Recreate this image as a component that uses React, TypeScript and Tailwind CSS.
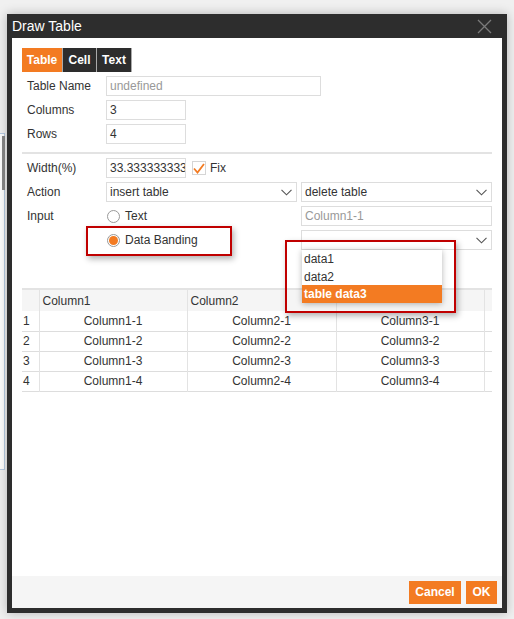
import React from 'react';

const ORANGE = 'bg-[#f37b22]';

function Chevron() {
  return (
    <svg width="11" height="7" viewBox="0 0 11 7" className="shrink-0">
      <path d="M0.5 0.8 L5.5 5.8 L10.5 0.8" fill="none" stroke="#555" strokeWidth="1.1" />
    </svg>
  );
}

function Select({ value, className = '' }: { value?: string; className?: string }) {
  return (
    <div
      className={`flex h-[20px] items-center justify-between border border-[#dddddd] bg-white pl-[3px] pr-[4px] text-[12px] text-[#333] ${className}`}
    >
      <span>{value}</span>
      <Chevron />
    </div>
  );
}

function Input({ value, placeholder, className = '' }: { value?: string; placeholder?: string; className?: string }) {
  return (
    <div
      className={`flex h-[20px] items-center overflow-hidden whitespace-nowrap border border-[#dddddd] bg-white pl-[3px] text-[12px] ${
        value ? 'text-[#333]' : 'text-[#999]'
      } ${className}`}
    >
      {value ?? placeholder}
    </div>
  );
}

function Radio({ checked, label }: { checked?: boolean; label: string }) {
  return (
    <div className="flex items-center gap-[5px] text-[12px] text-[#333]">
      <span className="flex h-[13px] w-[13px] items-center justify-center rounded-full border border-[#999] bg-white">
        {checked && <span className="h-[9px] w-[9px] rounded-full bg-[#f37b22]" />}
      </span>
      <span>{label}</span>
    </div>
  );
}

function Row({ label, children }: { label?: string; children: React.ReactNode }) {
  return (
    <div className="flex h-[20px] items-center">
      <div className="w-[84px] shrink-0 pl-[5px] text-[12px] text-[#333]">{label}</div>
      {children}
    </div>
  );
}

const rows = [1, 2, 3, 4];

export default function App() {
  return (
    <div
      className="relative h-[619px] w-[514px] overflow-hidden bg-[#f0f0f0] pt-[14px] pl-[7px]"
      style={{ fontFamily: '"Liberation Sans", Arial, sans-serif' }}
    >
      {/* page element peeking out behind the dialog */}
      <div className="absolute left-[-4px] top-[133px] h-[337px] w-[9px] border border-[#b7cbe2] bg-white">
        <div className="ml-[5px] mt-[2px] h-[54px] w-[3px] bg-[#888]" />
      </div>

      <div className="relative flex h-[599px] w-[500px] flex-col bg-[#2d2d2d] px-[5px] pb-[5px] shadow-[0_0_10px_rgba(0,0,0,0.25)]">
        {/* title */}
        <div className="flex h-[24px] shrink-0 items-center justify-between">
          <span className="text-[14px] text-white">Draw Table</span>
          <svg width="15" height="15" viewBox="0 0 15 15" className="mr-[10px]">
            <path d="M1 1 L14 14 M14 1 L1 14" stroke="#7a7a7a" strokeWidth="1.3" />
          </svg>
        </div>

        {/* body */}
        <div className="relative flex-1 bg-white px-[10px] pt-[10px]">
          {/* tabs */}
          <div className="flex h-[24px] text-[12px] font-bold text-white">
            <div className={`flex w-[41px] items-center justify-center border-r border-[#aaa] ${ORANGE}`}>Table</div>
            <div className="flex w-[34px] items-center justify-center border-r border-[#aaa] bg-[#2d2d2d]">Cell</div>
            <div className="flex w-[35px] items-center justify-center border-r border-[#aaa] bg-[#2d2d2d]">Text</div>
          </div>

          <div className="mt-[4px] flex flex-col gap-[4px]">
            <Row label="Table Name">
              <Input placeholder="undefined" className="w-[215px]" />
            </Row>
            <Row label="Columns">
              <Input value="3" className="w-[80px]" />
            </Row>
            <Row label="Rows">
              <Input value="4" className="w-[80px]" />
            </Row>
          </div>

          <div className="mt-[8px] h-[2px] bg-[#e3e3e3]" />

          <div className="mt-[4px] flex flex-col gap-[4px]">
            <Row label="Width(%)">
              <Input value="33.33333333333" className="w-[80px]" />
              <span className="ml-[6px] flex h-[14px] w-[14px] items-center justify-center border border-[#d5d5d5] bg-white">
                <svg width="12" height="11" viewBox="0 0 12 11">
                  <path d="M1 5.5 L4.5 9.5 L11 1" fill="none" stroke="#f37b22" strokeWidth="1.8" />
                </svg>
              </span>
              <span className="ml-[4px] text-[12px] text-[#333]">Fix</span>
            </Row>
            <Row label="Action">
              <Select value="insert table" className="w-[191px]" />
              <Select value="delete table" className="ml-[4px] w-[191px]" />
            </Row>
            <Row label="Input">
              <div className="w-[195px] pl-[1px]">
                <Radio label="Text" />
              </div>
              <Input placeholder="Column1-1" className="w-[191px]" />
            </Row>
            <Row>
              <div className="w-[195px] pl-[1px]">
                <Radio checked label="Data Banding" />
              </div>
              <Select className="w-[191px]" />
            </Row>
          </div>

          {/* table */}
          <table className="mt-[38px] w-[470px] table-fixed border-collapse text-[12px] text-[#333]">
            <colgroup>
              <col className="w-[17px]" />
              <col className="w-[148px]" />
              <col className="w-[149px]" />
              <col className="w-[148px]" />
              <col className="w-[8px]" />
            </colgroup>
            <thead>
              <tr className="h-[22px] border-t-2 border-[#e3e3e3] bg-[#f5f5f5]">
                <th className="border-r border-[#e3e3e3]" />
                <th className="border-r border-[#e3e3e3] pl-[3px] text-left font-normal">Column1</th>
                <th className="border-r border-[#e3e3e3] pl-[3px] text-left font-normal">Column2</th>
                <th className="border-r border-[#e3e3e3]" />
                <th />
              </tr>
            </thead>
            <tbody>
              {rows.map((r) => (
                <tr key={r} className="h-[20px] border-b border-[#dddddd]">
                  <td className="border-r border-[#e3e3e3] pl-[1px]">{r}</td>
                  <td className="border-r border-[#e3e3e3] text-center">Column1-{r}</td>
                  <td className="border-r border-[#e3e3e3] text-center">Column2-{r}</td>
                  <td className="border-r border-[#e3e3e3] text-center">Column3-{r}</td>
                  <td />
                </tr>
              ))}
            </tbody>
          </table>

          {/* dropdown list of the data select */}
          <div className="absolute left-[290px] top-[212px] w-[140px] bg-white text-[12px] text-[#333] shadow-[0_1px_6px_rgba(0,0,0,0.3)]">
            <div className="flex h-[18px] items-center pl-[2px]">data1</div>
            <div className="flex h-[17px] items-center pl-[2px]">data2</div>
            <div className={`flex h-[18px] items-center pl-[2px] font-bold text-white ${ORANGE}`}>table data3</div>
          </div>

          {/* annotation boxes */}
          <div className="absolute left-[74px] top-[188px] h-[30px] w-[146px] border-2 border-[#c00000] shadow-[2px_3px_6px_rgba(0,0,0,0.3)]" />
          <div className="absolute left-[273px] top-[202px] h-[73px] w-[171px] border-2 border-[#c00000] shadow-[2px_3px_6px_rgba(0,0,0,0.3)]" />
        </div>

        {/* footer */}
        <div className="flex h-[32px] shrink-0 items-center justify-end gap-[5px] bg-[#f5f5f5] pr-[5px]">
          <button className={`h-[23px] w-[52px] text-[12px] font-bold text-white ${ORANGE}`}>Cancel</button>
          <button className={`h-[23px] w-[31px] text-[12px] font-bold text-white ${ORANGE}`}>OK</button>
        </div>
      </div>
    </div>
  );
}
